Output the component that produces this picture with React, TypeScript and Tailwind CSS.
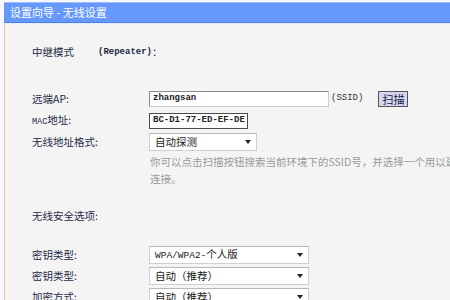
import React from "react";

const cjk = { fontFamily: '"Noto Sans CJK SC", "Noto Sans", sans-serif' };
const mono = { fontFamily: '"Liberation Mono", "DejaVu Sans Mono", "Noto Sans CJK SC", monospace' };

function Arrow() {
  return (
    <svg width="6" height="4" viewBox="0 0 6 4" className="shrink-0">
      <path d="M0 0 L6 0 L3 4 Z" fill="#222" />
    </svg>
  );
}

function Select({ w, children }: { w: string; children: React.ReactNode }) {
  return (
    <div
      className={`${w} h-[18px] bg-white border border-[#cfcfcf] border-t-[#b8b8b8] flex items-center justify-between pl-[5px] pr-[5px] text-[10.5px] text-[#222]`}
    >
      <span className="whitespace-nowrap leading-none">{children}</span>
      <Arrow />
    </div>
  );
}

function Label({ children }: { children: React.ReactNode }) {
  return <div className="w-[117px] shrink-0 text-[10.5px] text-[#1f2a48] leading-none whitespace-nowrap">{children}</div>;
}

export default function App() {
  return (
    <div className="w-[450px] h-[300px] overflow-hidden bg-[#f6f8fb] pl-[4px] pt-[2px]" style={cjk}>
      <div className="h-[21px] bg-[#6699fb] border-t border-t-[#9cbcfc] border-b border-b-[#4d80e4] flex items-center pl-[6px] text-white text-[11px] leading-none">
        设置向导 - 无线设置
      </div>
      <div className="h-[300px] bg-[#f4f4f4] border-l border-l-[#eec494] border-t border-t-[#e4ecf8] pl-[27px]">
        <div className="h-[16px] mt-[20px] flex items-center text-[10.5px] text-[#1f2a48] leading-none">
          <span className="w-[66px]">中继模式</span>
          <span className="text-[9px] font-bold" style={mono}>(Repeater)</span>
          <span>：</span>
        </div>

        <div className="h-[16px] mt-[31px] flex items-center">
          <Label>远端AP:</Label>
          <div className="w-[180px] h-[16px] bg-white border border-t-[#8a8a8a] border-l-[#8a8a8a] border-r-[#c8ccd4] border-b-[#c8ccd4] flex items-center pl-[3px] text-[9px] font-bold text-[#222]" style={mono}>
            zhangsan
          </div>
          <span className="ml-[2px] text-[9px] text-[#333]" style={mono}>(SSID)</span>
          <div className="ml-[15px] h-[16px] px-[3px] bg-[#d6d6f0] border border-[#555] flex items-center text-[11px] text-[#1a1a3a] leading-none">
            扫描
          </div>
        </div>

        <div className="h-[16px] mt-[6px] flex items-center">
          <Label>
            <span className="text-[8.5px]" style={mono}>MAC</span>地址:
          </Label>
          <div className="w-[99px] h-[16px] bg-white border border-[#4a4a4a] flex items-center pl-[3px] text-[9px] font-bold text-[#222]" style={mono}>
            BC-D1-77-ED-EF-DE
          </div>
        </div>

        <div className="h-[18px] mt-[4px] flex items-center">
          <Label>无线地址格式:</Label>
          <Select w="w-[108px]">自动探测</Select>
        </div>

        <div className="ml-[118px] mt-[2px] text-[10.5px] leading-[17px] text-[#9a9a9a] whitespace-nowrap">
          <div>你可以点击扫描按钮搜索当前环境下的SSID号，并选择一个用以建立</div>
          <div>连接。</div>
        </div>

        <div className="h-[16px] mt-[21px] flex items-center">
          <Label>无线安全选项:</Label>
        </div>

        <div className="h-[18px] mt-[22px] flex items-center">
          <Label>密钥类型:</Label>
          <Select w="w-[160px]">
            <span style={mono} className="text-[9.5px]">WPA/WPA2-</span>个人版
          </Select>
        </div>
        <div className="h-[18px] mt-[3px] flex items-center">
          <Label>密钥类型:</Label>
          <Select w="w-[160px]">自动（推荐）</Select>
        </div>
        <div className="h-[18px] mt-[3px] flex items-center">
          <Label>加密方式:</Label>
          <Select w="w-[160px]">自动（推荐）</Select>
        </div>
      </div>
    </div>
  );
}
